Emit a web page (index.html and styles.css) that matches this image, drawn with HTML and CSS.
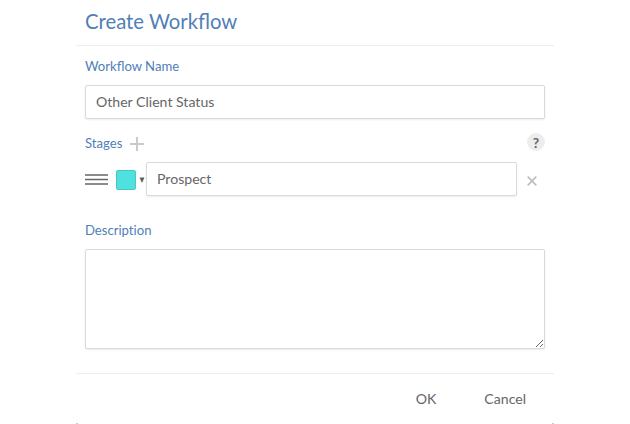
FILE: index.html
```html
<!DOCTYPE html>
<html lang="en">
<head>
<meta charset="utf-8">
<title>Create Workflow</title>
<link rel="stylesheet" href="styles.css">
</head>
<body>
<form class="dialog">
  <header class="dialog-header"><h1>Create Workflow</h1></header>
  <main class="dialog-body">
    <label class="label" for="name">Workflow Name</label>
    <input class="field name-field" id="name" type="text" value="Other Client Status">
    <div class="stages-header">
      <span class="label stages-label">Stages</span>
      <svg class="add" width="14" height="14" viewBox="0 0 14 14"><path d="M7 0v14M0 7h14"/></svg>
      <span class="help">?</span>
    </div>
    <div class="stage">
      <svg class="handle" width="23" height="11" viewBox="0 0 23 11"><path d="M0 1h23M0 5.5h23M0 10h23"/></svg>
      <span class="swatch"></span>
      <svg class="caret" width="6" height="6" viewBox="0 0 6 6"><path d="M.5 0.5h5L3 6z"/></svg>
      <input class="field stage-field" type="text" value="Prospect">
      <svg class="remove" width="10" height="10" viewBox="0 0 10 10"><path d="M.7.7l8.6 8.6M9.3.7L.7 9.3"/></svg>
    </div>
    <label class="label description-label" for="description">Description</label>
    <textarea class="field description" id="description"></textarea>
  </main>
  <footer class="dialog-footer">
    <button type="button">OK</button>
    <button type="button">Cancel</button>
  </footer>
  <div class="dialog-edge"><span></span><span></span></div>
</form>
</body>
</html>
```
FILE: styles.css
```css
* { box-sizing: border-box; }
body {
  margin: 0;
  background: #fff;
  color: #666;
  font: 14.1px/20px Lato, "Liberation Sans", sans-serif;
  overflow: hidden;
}
.dialog {
  display: flex;
  flex-direction: column;
  width: 478px;
  height: 424px;
  margin-left: 76px;
}
.dialog-header {
  height: 46px;
  padding: 7px 9px 0;
  border-bottom: 1px solid #eee;
}
h1 {
  margin: 0;
  color: #5080b6;
  font-size: 20.3px;
  font-weight: 400;
  line-height: 28px;
}
.dialog-body {
  display: flex;
  flex-direction: column;
  height: 327px;
  padding: 10px 9px 0;
}
.label {
  color: #5080b6;
  font-size: 13.1px;
  line-height: 20px;
}
.field {
  display: block;
  width: 100%;
  height: 34px;
  margin: 0;
  padding: 0 10px 2px;
  border: 1px solid #d9dadb;
  border-radius: 2px;
  box-shadow: 0 1px 2px rgba(0, 0, 0, .08);
  background: #fff;
  color: #666;
  font: inherit;
  outline: 0;
}
.name-field { margin-top: 9px; }
.stages-header {
  display: flex;
  align-items: center;
  height: 20px;
  margin-top: 13px;
}
.stages-label { margin-top: 2px; }
.add {
  margin: 4px 0 0 8px;
  stroke: #cacaca;
  stroke-width: 2;
}
.help {
  width: 18px;
  height: 18px;
  margin: -1px 0 0 auto;
  border-radius: 50%;
  background: #ededed;
  font-size: 14px;
  font-weight: 700;
  line-height: 19px;
  text-align: center;
}
.stage {
  display: flex;
  align-items: center;
  height: 34px;
  margin-top: 10px;
}
.handle {
  margin-top: 1px;
  stroke: #666;
  stroke-width: 1.5;
}
.swatch {
  width: 20px;
  height: 20px;
  margin: 2px 0 0 8px;
  border: 1px solid #45c9c7;
  border-radius: 2px;
  background: #50e1df;
}
.caret {
  margin: 2px 1px 0 3px;
  fill: #5f5f5f;
}
.stage-field { width: 371px; }
.remove {
  margin: 4px 0 0 10px;
  stroke: #bfbfbf;
  stroke-width: 1.7;
}
.description-label {
  margin-top: 24px;
  font-variant-ligatures: none;
}
.description {
  height: 100px;
  margin-top: 9px;
  padding: 8px 10px;
  resize: vertical;
}
.dialog-footer {
  display: flex;
  justify-content: flex-end;
  gap: 48px;
  height: 50px;
  padding: 15px 28px 0 0;
  border-top: 1px solid #eee;
}
button {
  height: 20px;
  padding: 0;
  border: 0;
  background: none;
  color: #666;
  font: inherit;
}
.dialog-edge {
  display: flex;
  justify-content: space-between;
}
.dialog-edge span {
  width: 2px;
  height: 1px;
  background: #ccc;
}
```
